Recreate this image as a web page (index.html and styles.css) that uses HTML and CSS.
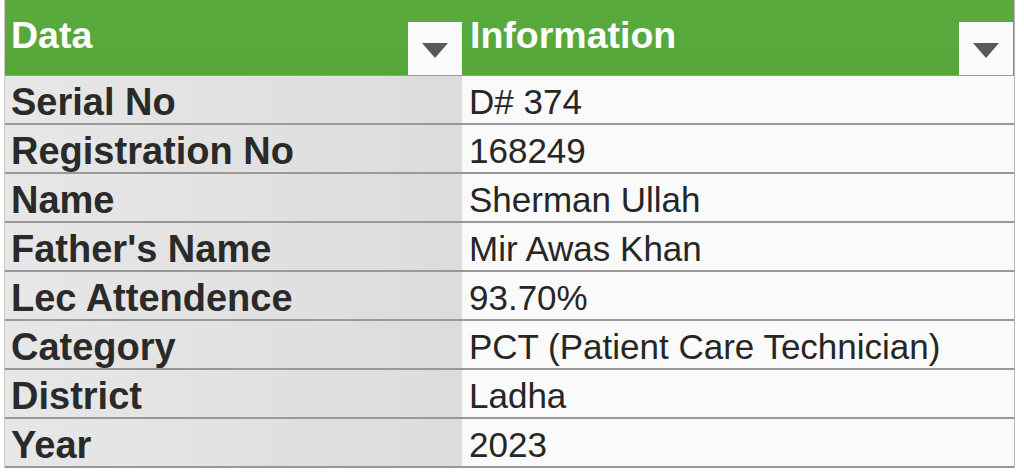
FILE: index.html
```html
<!DOCTYPE html>
<html>
<head>
<meta charset="utf-8">
<link rel="stylesheet" href="styles.css">
</head>
<body>
<div class="sheet">
  <div class="head">
    <div class="hcell hleft">
      <span class="htext">Data</span>
      <span class="filter"><svg width="26" height="15" viewBox="0 0 26 15"><polygon points="0,0 26,0 13,15" fill="#595959"/></svg></span>
    </div>
    <div class="hcell hright">
      <span class="htext">Information</span>
      <span class="filter"><svg width="26" height="15" viewBox="0 0 26 15"><polygon points="0,0 26,0 13,15" fill="#595959"/></svg></span>
    </div>
  </div>
  <div class="row"><div class="key">Serial No</div><div class="val">D# 374</div></div>
  <div class="row"><div class="key">Registration No</div><div class="val">168249</div></div>
  <div class="row"><div class="key">Name</div><div class="val">Sherman Ullah</div></div>
  <div class="row"><div class="key">Father's Name</div><div class="val">Mir Awas Khan</div></div>
  <div class="row"><div class="key">Lec Attendence</div><div class="val">93.70%</div></div>
  <div class="row"><div class="key">Category</div><div class="val">PCT (Patient Care Technician)</div></div>
  <div class="row"><div class="key">District</div><div class="val">Ladha</div></div>
  <div class="row"><div class="key">Year</div><div class="val">2023</div></div>
</div>
</body>
</html>
```
FILE: styles.css
```css
html, body {
  margin: 0;
  padding: 0;
  background: #ffffff;
}
body {
  font-family: "Liberation Sans", Arial, sans-serif;
  padding-left: 4px;
  width: 1011px;
}
.sheet {
  border-left: 1px solid #c8c8c8;
  border-right: 1px solid #b8b8b8;
}
.head {
  display: grid;
  grid-template-columns: 457px 552px;
  height: 75px;
  background: linear-gradient(to bottom, #5aab3d, #55a739);
  border-bottom: 1px solid #9a9a9a;
}
.hcell {
  display: flex;
  justify-content: space-between;
  align-items: flex-end;
}
.hright {
  padding-right: 1px;
}
.htext {
  align-self: flex-start;
  color: #ffffff;
  font-weight: bold;
  font-size: 37.5px;
  line-height: 36px;
  padding-top: 17px;
  padding-left: 6px;
}
.hright .htext {
  padding-left: 8px;
}
.filter {
  width: 54px;
  height: 53px;
  background: #fbfbfb;
  display: flex;
  align-items: center;
  justify-content: center;
  padding-top: 3px;
  box-sizing: border-box;
}
.row {
  display: grid;
  grid-template-columns: 457px 552px;
  height: 47px;
  border-bottom: 2px solid #999999;
}
.key {
  background: linear-gradient(to right, #e7e7e7, #dcdcdc);
  color: #2a2a2a;
  font-weight: bold;
  font-size: 38px;
  line-height: 44px;
  padding-left: 6px;
  padding-top: 4px;
  height: 47px;
  box-sizing: border-box;
  white-space: nowrap;
  overflow: hidden;
}
.val {
  background: #fafafa;
  color: #262626;
  font-size: 35px;
  line-height: 44px;
  padding-left: 7px;
  padding-top: 4px;
  height: 47px;
  box-sizing: border-box;
  white-space: nowrap;
  overflow: hidden;
}
```
